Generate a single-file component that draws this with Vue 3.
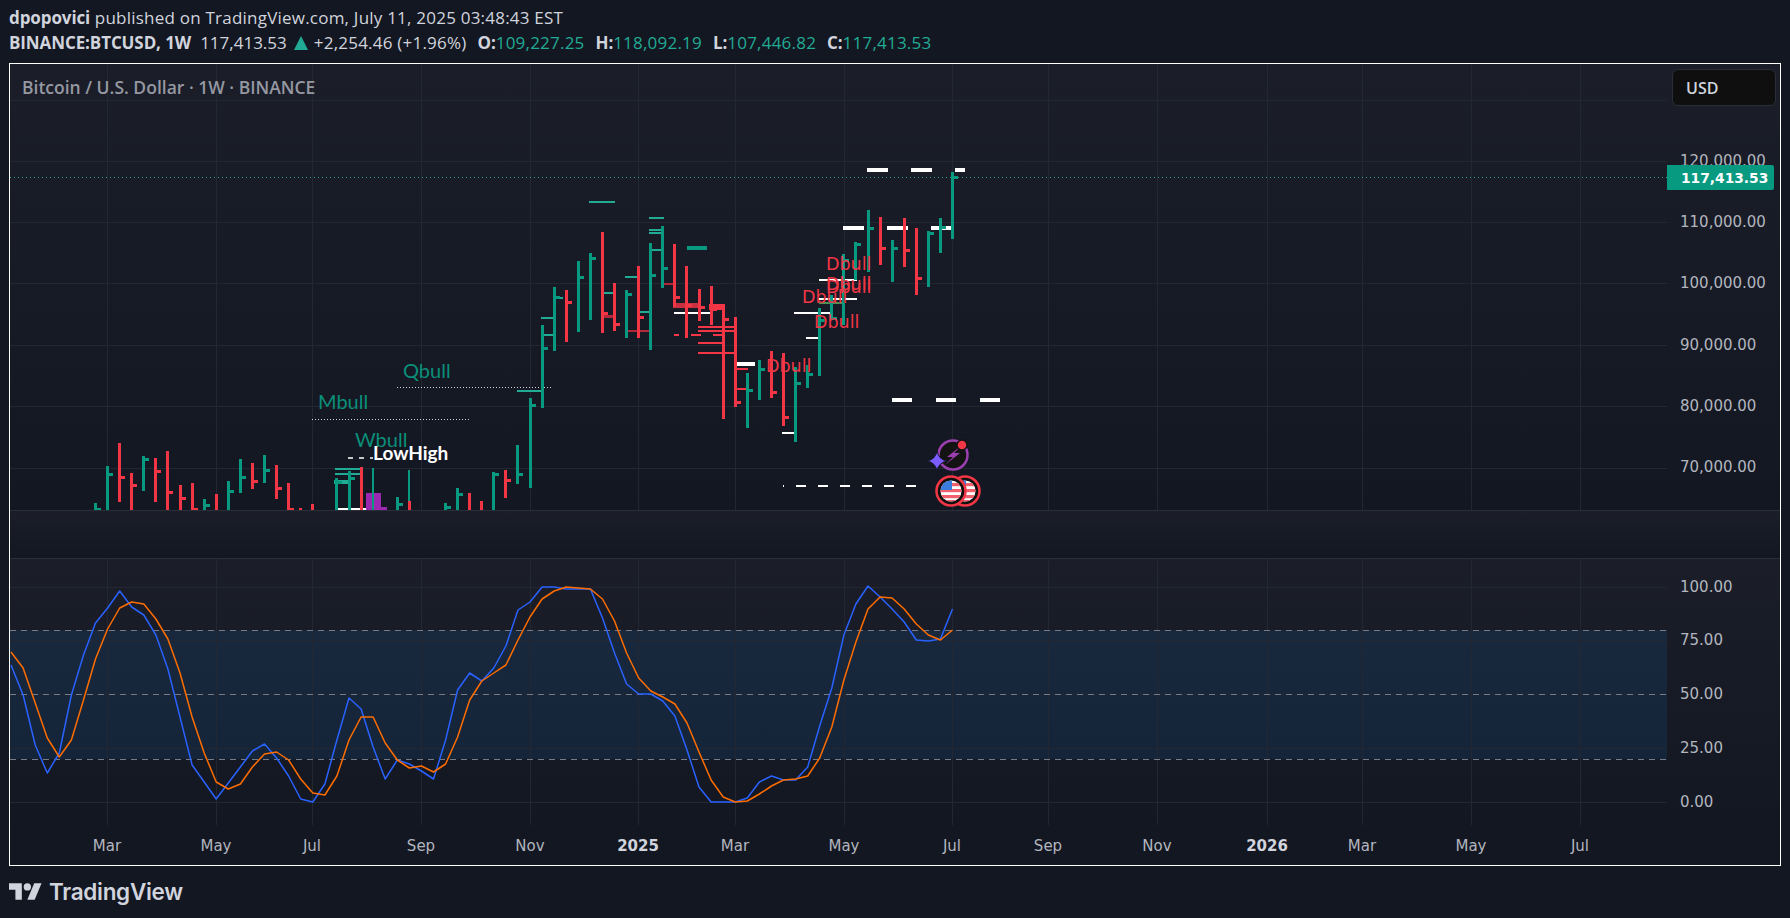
<template>
  <div class="page">
    <header class="head">
      <div class="head__line"><b>dpopovici</b> published on TradingView.com, July 11, 2025 03:48:43 EST</div>
      <div class="head__line head__line--quote">
        <b>BINANCE:BTCUSD, 1W</b>
        <span class="head__last">117,413.53</span>
        <span class="head__up"></span>
        <span class="head__chg">+2,254.46 (+1.96%)</span>
        <span v-for="q in ohlc" :key="q.k" class="head__ohlc"><b>{{ q.k }}:</b><i>{{ q.v }}</i></span>
      </div>
    </header>

    <section class="chart">
      <div class="chart__title">Bitcoin / U.S. Dollar · 1W · BINANCE</div>
      <div class="chart__currency">USD</div>

      <svg class="pane pane--main" viewBox="10 64 1770 446" width="1770" height="446">
        <line v-for="y in priceGrid" :key="y" class="grid" x1="10" x2="1667" :y1="y" :y2="y" />
        <line v-for="x in timeGrid" :key="x" class="grid" :x1="x" :x2="x" y1="64" y2="510" />
        <line class="last-line" x1="10" x2="1667" y1="177.5" y2="177.5" />

        <line class="dots" x1="397" x2="553" y1="387.5" y2="387.5" />
        <line class="dots" x1="312" x2="470" y1="419.5" y2="419.5" />
        <line class="dashes" x1="348" x2="373" y1="458" y2="458" />
        <line class="dashes dashes--long" x1="783" x2="918" y1="486" y2="486" />

        <g shape-rendering="crispEdges">
          <rect v-for="(s, i) in segments" :key="i" :x="s[0]" :y="s[2]" :width="s[1] - s[0]" :height="s[3]" :fill="s[4]" />
          <rect x="366" y="493" width="15" height="17" fill="#9c27b0" />
          <rect x="381" y="507" width="6" height="3" fill="#9c27b0" />
          <g v-for="b in barRects" :key="b.k" :fill="b.color">
            <rect :x="b.x" :y="b.top" :width="b.w" :height="b.h" />
            <rect v-if="b.tick" :x="b.x + b.w" :y="b.tick - 1.5" width="4" height="3" />
          </g>
          <rect x="408" y="501" width="3" height="9" fill="#f23645" />
        </g>

        <text v-for="(t, i) in dbull" :key="i" class="lbl lbl--red" :x="t[0]" :y="t[1]">Dbull</text>
        <text class="lbl lbl--green" x="403" y="378">Qbull</text>
        <text class="lbl lbl--green" x="318" y="409">Mbull</text>
        <text class="lbl lbl--green" x="355" y="447">Wbull</text>
        <text class="lbl lbl--white" x="373" y="460">LowHigh</text>

        <!-- earnings / dividends markers -->
        <circle cx="953" cy="455" r="14.5" fill="#131313" stroke="#9c3fb0" stroke-width="2.5" />
        <path d="M962 445L947 457H953L945 465L960 453H954Z" fill="#9c3fb0" />
        <circle cx="962" cy="445" r="5" fill="#f23645" stroke="#131313" stroke-width="1.5" />
        <path d="M937 450Q938 460 948 461Q938 462 937 472Q936 462 926 461Q936 460 937 450Z" fill="#7b5cff" stroke="#131722" stroke-width="1" />
        <g v-for="cx in [965, 951]" :key="cx">
          <circle :cx="cx" cy="491" r="14.5" fill="#111" stroke="#f23645" stroke-width="2.5" />
          <g :clip-path="`url(#flag${cx})`">
            <rect :x="cx - 11" y="480" width="22" height="22" fill="#fff" />
            <rect v-for="y in [483, 489, 495, 500]" :key="y" :x="cx - 11" :y="y" width="22" height="3.2" fill="#f0616d" />
            <rect :x="cx - 11" y="480" width="12" height="10" fill="#3b7ddd" />
          </g>
          <clipPath :id="`flag${cx}`"><circle :cx="cx" cy="491" r="10.5" /></clipPath>
        </g>

        <text v-for="p in priceLabels" :key="p.y" class="axis" x="1680" :y="p.y">{{ p.t }}</text>
        <path d="M1667 165H1772a2 2 0 0 1 2 2V188a2 2 0 0 1 -2 2H1667Z" fill="#089981" />
        <text class="axis axis--last" x="1681" y="177.5">117,413.53</text>
      </svg>

      <div class="gap"></div>

      <svg class="pane pane--ind" viewBox="10 559 1770 266" width="1770" height="266">
        <rect x="10" y="630" width="1657" height="129" fill="#2196f3" fill-opacity="0.1" />
        <line v-for="y in [587, 640, 694, 748, 802]" :key="y" class="grid" x1="10" x2="1667" :y1="y" :y2="y" />
        <line v-for="x in timeGrid" :key="x" class="grid" :x1="x" :x2="x" y1="559" y2="825" />
        <line v-for="y in [630, 694, 759]" :key="y" class="band" x1="10" x2="1667" :y1="y" :y2="y" />
        <polyline class="stoch stoch--k" :points="kPoints" />
        <polyline class="stoch stoch--d" :points="dPoints" />
        <text v-for="p in stochLabels" :key="p.y" class="axis" x="1680" :y="p.y">{{ p.t }}</text>
      </svg>

      <svg class="time" viewBox="10 825 1770 40" width="1770" height="40">
        <text
          v-for="t in timeLabels"
          :key="t.x"
          class="axis axis--time"
          :class="{ 'axis--year': t.year }"
          :x="t.x"
          y="21"
          transform="translate(0 825)"
        >{{ t.t }}</text>
      </svg>
    </section>

    <footer class="foot">
      <svg class="foot__mark" viewBox="0 0 36 18" width="33" height="17">
        <path d="M14 18H7V7H0V0h14z" />
        <circle cx="20" cy="4" r="4" />
        <path d="M28 18h-8L27.5 0h8z" />
      </svg>
      <span class="foot__name">TradingView</span>
    </footer>
  </div>
</template>

<script setup>
const GREEN = '#089981'
const RED = '#f23645'
const TEAL = '#22ab94'
const WHITE = '#ffffff'
const DARK_RED = '#b2283a'

const ohlc = [
  { k: 'O', v: '109,227.25' },
  { k: 'H', v: '118,092.19' },
  { k: 'L', v: '107,446.82' },
  { k: 'C', v: '117,413.53' },
]

const priceGrid = [100, 161, 222, 283, 345, 406, 468]
const timeGrid = [107, 216, 312, 421, 530, 638, 735, 844, 952, 1048, 1157, 1267, 1362, 1471, 1580]

const priceLabels = [
  { t: '120,000.00', y: 161 },
  { t: '110,000.00', y: 222 },
  { t: '100,000.00', y: 283 },
  { t: '90,000.00', y: 345 },
  { t: '80,000.00', y: 406 },
  { t: '70,000.00', y: 467 },
]
const stochLabels = [
  { t: '100.00', y: 587 },
  { t: '75.00', y: 640 },
  { t: '50.00', y: 694 },
  { t: '25.00', y: 748 },
  { t: '0.00', y: 802 },
]
const timeLabels = [
  { t: 'Mar', x: 107 }, { t: 'May', x: 216 }, { t: 'Jul', x: 312 }, { t: 'Sep', x: 421 },
  { t: 'Nov', x: 530 }, { t: '2025', x: 638, year: true }, { t: 'Mar', x: 735 }, { t: 'May', x: 844 },
  { t: 'Jul', x: 952 }, { t: 'Sep', x: 1048 }, { t: 'Nov', x: 1157 }, { t: '2026', x: 1267, year: true },
  { t: 'Mar', x: 1362 }, { t: 'May', x: 1471 }, { t: 'Jul', x: 1580 },
]

// weekly bars, oldest first: [colour, high y, low y, close y, thin]
const bars = [
  ['g', 503, 510, 509], ['g', 466, 510, 474], ['r', 443, 502, 477], ['r', 473, 510, 485],
  ['g', 456, 491, 459], ['r', 458, 502, 471], ['r', 451, 510, 492], ['r', 485, 510, 498],
  ['r', 483, 510, 509], ['g', 499, 510, 505], ['r', 494, 510], ['g', 481, 510, 491],
  ['g', 459, 493, 477], ['r', 463, 489, 481], ['g', 455, 483, 470], ['r', 465, 499, 488],
  ['r', 483, 510, 509], ['r', 508, 510], ['r', 504, 510], null,
  ['g', 478, 510, 482], ['g', 471, 510, 478], ['r', 467, 510], ['g', 468, 510, null, true],
  null, ['g', 497, 510, 504], ['g', 470, 501, null, true], null,
  null, ['g', 503, 510, 507], ['g', 488, 510, 494], ['r', 493, 510],
  ['r', 501, 510], ['g', 472, 510, 474], ['r', 470, 498, 480], ['g', 445, 484, 474],
  ['g', 398, 488, 405], ['g', 325, 408, 348], ['g', 287, 351, 297], ['r', 290, 342, 302],
  ['g', 261, 332, 277], ['g', 253, 320, 258], ['r', 232, 333, 313], ['r', 283, 331, 324],
  ['g', 290, 338, 294], ['r', 266, 338, 317], ['g', 243, 350, 275], ['g', 226, 288, 268],
  ['r', 244, 307, 297], ['r', 266, 338, 305], ['r', 289, 321, 307], ['r', 286, 325, 309],
  ['r', 304, 419, 319], ['r', 317, 407, 402], ['g', 373, 428, 390], ['g', 360, 400, 369],
  ['r', 351, 398, 392], ['r', 353, 426, 417], ['g', 367, 442, 383], ['g', 365, 388, 374],
  ['g', 308, 376, 320], ['g', 295, 320, 318], ['g', 254, 325, 260], ['g', 242, 280, 244],
  ['g', 210, 272, 228], ['r', 217, 265, 248], ['g', 240, 282, 248], ['r', 218, 267, 250],
  ['r', 228, 295, 278], ['g', 231, 287, 233], ['g', 218, 253, 227], ['g', 172, 239, 177],
]

const barRects = bars.flatMap((b, k) => {
  if (!b) return []
  const [c, top, bottom, tick, thin] = b
  return [{
    k,
    x: Math.round(951 - 12.07 * (71 - k)),
    w: thin ? 2 : 3,
    top,
    h: bottom - top,
    tick,
    color: c === 'g' ? GREEN : RED,
  }]
})

// [x1, x2, y, height, colour]
const segments = [
  [589, 615, 201, 2, TEAL], [649, 664, 217, 2, TEAL], [649, 663, 229, 2, TEAL], [649, 663, 232, 2, TEAL],
  [687, 707, 246, 4, GREEN], [541, 553, 317, 2, TEAL], [541, 553, 334, 2, TEAL], [557, 563, 297, 2, TEAL],
  [604, 613, 292, 2, TEAL], [625, 637, 276, 2, TEAL], [640, 649, 311, 2, TEAL], [517, 542, 390, 2, TEAL],
  [652, 663, 249, 2, TEAL],
  [335, 360, 468, 2, TEAL], [335, 360, 473, 2, TEAL], [334, 350, 480, 4, TEAL],
  [664, 674, 283, 2, DARK_RED], [603, 613, 315, 3, DARK_RED], [628, 649, 330, 2, DARK_RED],
  [673, 700, 303, 5, '#c8303f'], [709, 723, 304, 6, RED],
  [698, 734, 326, 2, RED], [698, 734, 330, 2, RED], [674, 679, 334, 2, RED], [691, 701, 334, 2, RED],
  [713, 722, 334, 2, RED], [698, 722, 342, 2, RED], [698, 734, 352, 2, RED], [737, 748, 368, 2, RED],
  [737, 748, 388, 2, RED],
  [867, 888, 168, 4, WHITE], [911, 932, 168, 4, WHITE], [955, 965, 168, 4, WHITE],
  [843, 864, 226, 4, WHITE], [887, 908, 226, 4, WHITE], [931, 951, 226, 4, WHITE],
  [819, 857, 279, 2, WHITE], [819, 857, 298, 2, WHITE], [794, 832, 312, 2, WHITE], [806, 820, 337, 2, WHITE],
  [735, 755, 362, 4, WHITE], [674, 710, 312, 2, WHITE], [782, 796, 432, 2, WHITE],
  [819, 843, 302, 2, '#4a8f55'],
  [892, 912, 398, 4, WHITE], [936, 956, 398, 4, WHITE], [980, 1000, 398, 4, WHITE],
  [338, 372, 508, 2, WHITE],
]

const dbull = [[826, 270], [826, 290], [826, 293], [802, 303], [814, 328], [766, 372]]

// stochastic lines, read off as page y, newest last
const kY = [
  665, 695, 745, 773, 753, 695, 655, 623, 608, 591, 607, 615, 635, 669, 717, 765, 782, 799, 783, 767,
  751, 744, 758, 776, 799, 802, 784, 740, 698, 709, 747, 779, 760, 764, 771, 779, 740, 690, 673, 681,
  668, 646, 610, 602, 587, 587, 589, 589, 589, 618, 653, 684, 694, 694, 701, 716, 750, 787, 802, 802,
  802, 798, 782, 776, 780, 780, 767, 726, 688, 635, 604, 586, 597, 609, 622, 640, 641, 639, 609,
]
const dY = [
  652, 668, 703, 738, 757, 740, 700, 659, 629, 608, 602, 604, 619, 639, 673, 717, 753, 782, 789, 784,
  767, 754, 752, 760, 779, 793, 795, 776, 740, 717, 717, 743, 760, 768, 766, 772, 764, 737, 700, 681,
  673, 665, 640, 617, 599, 591, 587, 588, 589, 599, 621, 653, 678, 691, 697, 704, 723, 752, 780, 797,
  802, 801, 794, 786, 780, 779, 776, 758, 727, 680, 642, 609, 597, 598, 609, 624, 635, 640, 630,
]
const toPoints = ys => ys.map((y, i) => `${(952.5 - 12.07 * (ys.length - 1 - i)).toFixed(1)},${y}`).join(' ')
const kPoints = toPoints(kY)
const dPoints = toPoints(dY)
</script>

<style>
html,
body {
  margin: 0;
  background: #131722;
}
</style>

<style scoped>
.page {
  width: 1790px;
  height: 918px;
  overflow: hidden;
  background: #131722;
  color: #d1d4dc;
  font-family: "Open Sans", "Liberation Sans", sans-serif;
}

.head {
  height: 63px;
  box-sizing: border-box;
  padding: 5px 9px 0;
  font-size: 17px;
  letter-spacing: 0.22px;
}

.head b {
  letter-spacing: -0.1px;
}

.head__line {
  height: 25px;
  line-height: 25px;
  white-space: pre;
}

.head__line--quote {
  display: flex;
  align-items: center;
}

.head__last {
  margin-left: 9px;
  letter-spacing: 0;
}

.head__up {
  width: 0;
  height: 0;
  margin: 0 6px 0 7px;
  border-left: 7px solid transparent;
  border-right: 7px solid transparent;
  border-bottom: 14px solid #22ab94;
}

.head__ohlc {
  margin-left: 11px;
}

.head__ohlc i {
  font-style: normal;
  color: #22ab94;
}

.chart {
  position: relative;
  box-sizing: border-box;
  width: 1772px;
  height: 803px;
  margin-left: 9px;
  border: 1px solid #fff;
  background: #131722;
}

.chart__title {
  position: absolute;
  left: 12px;
  top: 11px;
  font-size: 17.5px;
  font-weight: 600;
  color: #9598a1;
}

.chart__currency {
  position: absolute;
  right: 4px;
  top: 5px;
  box-sizing: border-box;
  width: 104px;
  height: 37px;
  padding-left: 13px;
  line-height: 37px;
  font-size: 16px;
  font-weight: 600;
  color: #d1d4dc;
  background: #0f0f0f;
  border: 1px solid #2a2e39;
  border-radius: 6px;
}

.pane,
.time {
  display: block;
}

.pane--main,
.pane--ind,
.gap {
  background: linear-gradient(#1b1e29, #131722);
}

.gap {
  box-sizing: border-box;
  height: 49px;
  border-top: 1px solid #2a2e39;
  border-bottom: 1px solid #2a2e39;
}

.grid {
  stroke: #232732;
  stroke-width: 1;
  shape-rendering: crispEdges;
}

.last-line {
  stroke: #22ab94;
  stroke-dasharray: 1 3;
}

.dots {
  stroke: #d1d4dc;
  stroke-dasharray: 1 2;
}

.dashes {
  stroke: #fff;
  stroke-width: 1.5;
  stroke-dasharray: 5 6;
}

.dashes--long {
  stroke-width: 2;
  stroke-dasharray: 10 12;
  stroke-dashoffset: 9;
}

.band {
  stroke: #787b86;
  stroke-dasharray: 6 5;
  shape-rendering: crispEdges;
}

.stoch {
  fill: none;
  stroke-width: 1.5;
  stroke-linejoin: round;
}

.stoch--k {
  stroke: #2962ff;
}

.stoch--d {
  stroke: #ff6d00;
}

.lbl {
  font-family: "Lato", sans-serif;
  font-size: 20px;
}

.lbl--red {
  font-family: "DejaVu Sans", sans-serif;
  font-size: 17.5px;
  fill: #f23645;
}

.lbl--green {
  fill: #0b8f7a;
}

.lbl--white {
  fill: #fff;
  font-weight: 700;
  font-size: 19px;
}

.axis {
  font-family: "DejaVu Sans", sans-serif;
  font-size: 15px;
  fill: #b2b5be;
  dominant-baseline: central;
}

.axis--last {
  fill: #fff;
  font-weight: 700;
  font-size: 13.8px;
}

.axis--time {
  text-anchor: middle;
}

.axis--year {
  font-weight: 700;
  fill: #d1d4dc;
}

.foot {
  display: flex;
  align-items: center;
  gap: 7px;
  height: 50px;
  padding-left: 9px;
}

.foot__mark {
  fill: #d1d4dc;
}

.foot__name {
  font-family: "Inter", sans-serif;
  font-size: 22.5px;
  font-weight: 600;
  letter-spacing: -0.3px;
  color: #d1d4dc;
}
</style>
